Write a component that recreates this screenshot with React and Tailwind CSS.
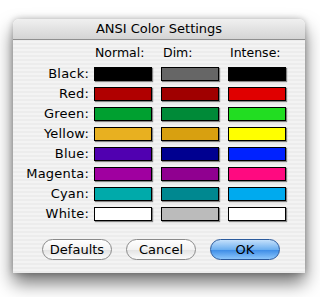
import React from 'react';

const rows = [
    { name: 'Black', normal: '#000000', dim: '#666666', intense: '#000000' },
    { name: 'Red', normal: '#b00000', dim: '#a00000', intense: '#e00000' },
    { name: 'Green', normal: '#00a030', dim: '#008a38', intense: '#22dd22' },
    { name: 'Yellow', normal: '#e8b020', dim: '#d8a010', intense: '#ffff00' },
    { name: 'Blue', normal: '#5000b0', dim: '#000090', intense: '#0022ff' },
    { name: 'Magenta', normal: '#a000a0', dim: '#900090', intense: '#ff0a80' },
    { name: 'Cyan', normal: '#00aaaa', dim: '#008890', intense: '#00aaee' },
    { name: 'White', normal: '#ffffff', dim: '#bbbbbb', intense: '#ffffff' },
];

function Swatch({ color }) {
    return (
        <div
            className="h-[14px] w-[58px] border border-black shadow-[1px_1px_1px_rgba(0,0,0,0.45)]"
            style={{ backgroundColor: color }}
        />
    );
}

function AquaButton({ children, primary }) {
    const base = "h-[21px] w-[70px] rounded-full border text-[13px] leading-none flex items-center justify-center";
    const look = primary
        ? "border-[#2b5a9c] bg-[linear-gradient(180deg,#c4e0fb_0%,#6eb0f0_50%,#3a8ae6_51%,#8cc6fb_100%)] text-black"
        : "border-[#8a8a8a] bg-[linear-gradient(180deg,#ffffff_0%,#f2f2f2_50%,#e2e2e2_51%,#fbfbfb_100%)] text-black";
    return <button className={`${base} ${look}`}>{children}</button>;
}

export default function App() {
    return (
        <div className="w-[320px] h-[297px] bg-white pt-[19px] pl-[13px] font-['DejaVu_Sans',sans-serif] text-black">
            <div className="w-[292px] h-[254px] rounded-t-[6px] overflow-hidden shadow-[0_10px_18px_rgba(0,0,0,0.55),0_0_6px_rgba(0,0,0,0.25)] flex flex-col">
                <div className="h-[21px] flex items-center justify-center border-b border-[#8f8f8f] bg-[linear-gradient(180deg,#f0f0f0_0%,#d4d4d4_100%)] text-[13px]">
                    ANSI Color Settings
                </div>
                <div className="flex-1 bg-[repeating-linear-gradient(0deg,#ececec_0px,#ececec_2px,#f3f3f3_2px,#f3f3f3_4px)] pt-[5px]">
                    <div className="flex text-[12.5px] leading-[16px]">
                        <div className="w-[76px]" />
                        <div className="ml-[6px] w-[58px]">Normal:</div>
                        <div className="ml-[10px] w-[58px]">Dim:</div>
                        <div className="ml-[9px] w-[58px]">Intense:</div>
                    </div>
                    <div className="mt-[6px] flex flex-col gap-[6px]">
                        {rows.map((row) => (
                            <div key={row.name} className="flex items-center h-[14px] text-[13px] tracking-[0.2px]">
                                <div className="w-[76px] text-right">{row.name}:</div>
                                <div className="ml-[5px] flex gap-[9px]">
                                    <Swatch color={row.normal} />
                                    <Swatch color={row.dim} />
                                    <Swatch color={row.intense} />
                                </div>
                            </div>
                        ))}
                    </div>
                    <div className="mt-[18px] flex pl-[29px] gap-[14px]">
                        <AquaButton>Defaults</AquaButton>
                        <AquaButton>Cancel</AquaButton>
                        <AquaButton primary>OK</AquaButton>
                    </div>
                </div>
            </div>
        </div>
    );
}
